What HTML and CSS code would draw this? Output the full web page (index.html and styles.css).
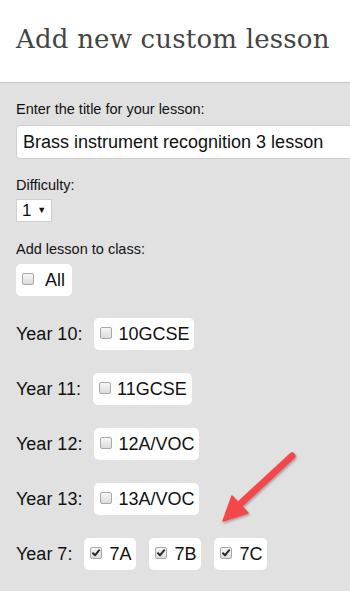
FILE: index.html
```html
<!DOCTYPE html>
<html>
<head>
<meta charset="utf-8">
<link rel="stylesheet" href="styles.css">
</head>
<body>
<div class="page">
  <header class="header">
    <h1 class="title">Add new custom lesson</h1>
  </header>
  <form class="panel">
    <label class="label">Enter the title for your lesson:</label>
    <div class="text-input">Brass instrument recognition 3 lesson</div>

    <label class="label label-difficulty">Difficulty:</label>
    <div class="select">1 <span class="caret">&#9660;</span></div>

    <label class="label label-class">Add lesson to class:</label>
    <div class="row row-all">
      <span class="chip chip-all"><span class="cb"></span>All</span>
    </div>

    <div class="row">
      <span class="year">Year 10:</span>
      <span class="chip"><span class="cb"></span>10GCSE</span>
    </div>
    <div class="row">
      <span class="year">Year 11:</span>
      <span class="chip"><span class="cb"></span>11GCSE</span>
    </div>
    <div class="row">
      <span class="year">Year 12:</span>
      <span class="chip"><span class="cb"></span>12A/VOC</span>
    </div>
    <div class="row">
      <span class="year">Year 13:</span>
      <span class="chip"><span class="cb"></span>13A/VOC</span>
    </div>
    <div class="row">
      <span class="year">Year 7:</span>
      <span class="chip"><span class="cb checked"><svg viewBox="0 0 12 12" width="12" height="12"><path d="M3 6.2 L5 8.3 L9.2 3.2" fill="none" stroke="#2a2a2a" stroke-width="2" stroke-linecap="round" stroke-linejoin="round"/></svg></span>7A</span>
      <span class="chip"><span class="cb checked"><svg viewBox="0 0 12 12" width="12" height="12"><path d="M3 6.2 L5 8.3 L9.2 3.2" fill="none" stroke="#2a2a2a" stroke-width="2" stroke-linecap="round" stroke-linejoin="round"/></svg></span>7B</span>
      <span class="chip"><span class="cb checked"><svg viewBox="0 0 12 12" width="12" height="12"><path d="M3 6.2 L5 8.3 L9.2 3.2" fill="none" stroke="#2a2a2a" stroke-width="2" stroke-linecap="round" stroke-linejoin="round"/></svg></span>7C</span>
    </div>

    <svg class="arrow" width="350" height="591" viewBox="0 0 350 591">
      <defs>
        <filter id="sh" x="-20%" y="-20%" width="140%" height="140%">
          <feDropShadow dx="1" dy="1.5" stdDeviation="1.2" flood-color="#000" flood-opacity="0.3"/>
        </filter>
      </defs>
      <g filter="url(#sh)" fill="#f4474a" stroke="#f4474a">
        <line x1="292" y1="456" x2="238" y2="506" stroke-width="7" stroke-linecap="round"/>
        <polygon points="223,521 232,496 248,513" stroke-width="1.5" stroke-linejoin="round"/>
      </g>
    </svg>
  </form>
</div>
</body>
</html>
```

FILE: styles.css
```css
* { box-sizing: border-box; }
html, body { margin: 0; padding: 0; }
body {
  background: #e1e1e1;
  font-family: "Liberation Sans", Arial, sans-serif;
  color: #111;
  overflow: hidden;
}
.page {
  width: 350px;
  height: 591px;
  overflow: hidden;
  position: relative;
}
.header {
  background: #fff;
  height: 83px;
  border-bottom: 1px solid #c6c6c6;
  padding: 22px 0 0 16px;
}
.title {
  margin: 0;
  font-family: "DejaVu Serif", serif;
  font-weight: normal;
  font-size: 26px;
  line-height: 34px;
  color: #444;
  letter-spacing: 0.2px;
  white-space: nowrap;
}
.panel {
  padding: 18px 0 0 16px;
  display: flex;
  flex-direction: column;
  align-items: flex-start;
}
.label {
  font-size: 14.5px;
  line-height: 17px;
  color: #111;
  margin-bottom: 7px;
}
.text-input {
  width: 400px;
  height: 34px;
  background: #fff;
  border: 1px solid #cfcfcf;
  border-radius: 4px;
  font-size: 18px;
  line-height: 32px;
  padding-left: 6px;
  white-space: nowrap;
}
.label-difficulty { margin-top: 18px; margin-bottom: 5px; }
.select {
  height: 23px;
  width: 36px;
  background: #fff;
  border: 1px solid #cfcfcf;
  font-size: 17px;
  line-height: 21px;
  padding-left: 5px;
  white-space: nowrap;
}
.caret { font-size: 9px; vertical-align: 3px; margin-left: 1px; }
.label-class { margin-top: 19px; margin-bottom: 6px; }
.row {
  display: flex;
  align-items: center;
  gap: 12px;
  margin-bottom: 23px;
}
.row-all { margin-bottom: 22px; }
.year {
  font-size: 18px;
}
.chip {
  display: inline-flex;
  align-items: center;
  height: 32px;
  background: #fff;
  border-radius: 5px;
  padding: 0 5px 0 6px;
  font-size: 18px;
}
.chip + .chip { margin-left: 1px; }
.chip-all { padding-right: 7px; }
.chip-all .cb { margin-right: 11px; }
.cb {
  width: 12px;
  height: 12px;
  margin-right: 6px;
  margin-top: -3px;
  border: 1px solid #a8a8a8;
  border-radius: 2px;
  background: linear-gradient(#f6f6f6, #dcdcdc);
  display: inline-flex;
  align-items: center;
  justify-content: center;
  flex: none;
}
.cb.checked { margin-right: 7px; }
.cb svg { display: block; margin: -1px; }
.arrow {
  position: absolute;
  left: 0;
  top: 0;
  pointer-events: none;
}
```
